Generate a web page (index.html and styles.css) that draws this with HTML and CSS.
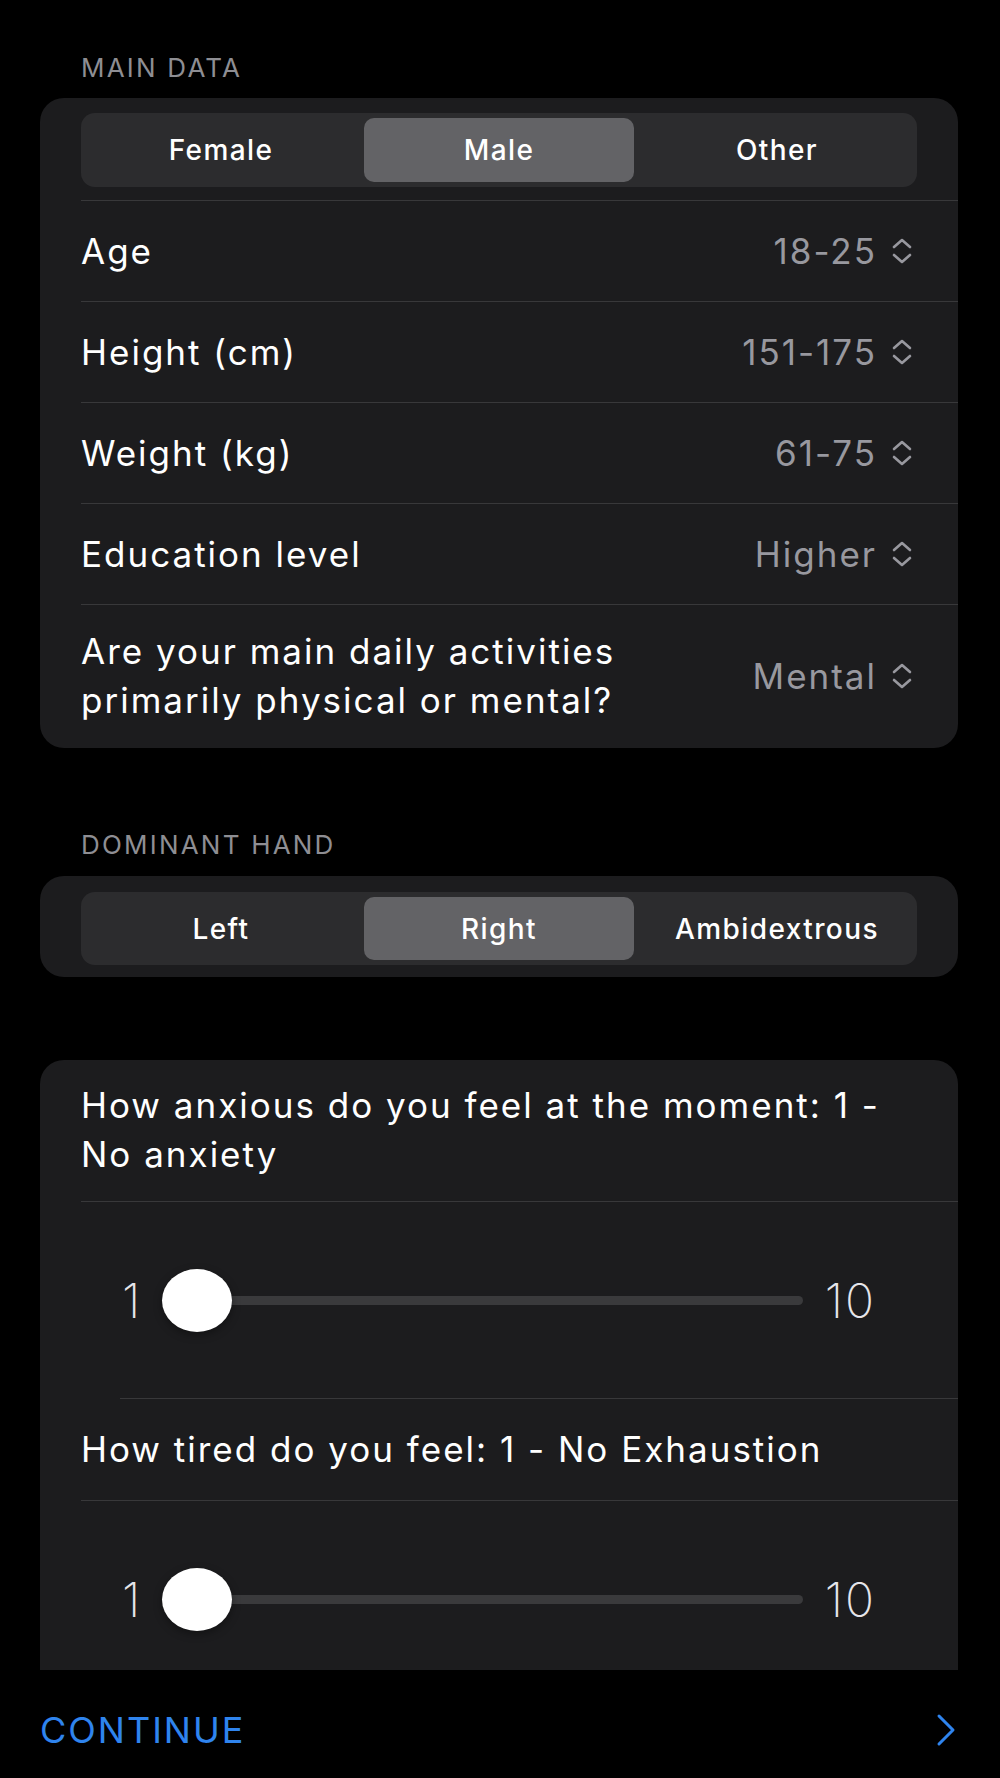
FILE: index.html
```html
<!DOCTYPE html>
<html lang="en">
<head>
    <meta charset="UTF-8">
    <meta name="viewport" content="width=device-width, initial-scale=1.0">
    <title>Profile</title>
    <link rel="stylesheet" href="styles.css">
</head>
<body>
    <div class="screen">
        <div class="content">
            <div class="section-title">MAIN DATA</div>
            <div class="card">
                <div class="segmented">
                    <div class="segment">Female</div>
                    <div class="segment selected">Male</div>
                    <div class="segment">Other</div>
                </div>
                <div class="row">
                    <div class="label">Age</div>
                    <div class="value">18-25
                        <svg class="updown" viewBox="0 0 22 28"><path d="M3 10 L11 3 L19 10 M3 18 L11 25 L19 18"/></svg>
                    </div>
                </div>
                <div class="row">
                    <div class="label">Height (cm)</div>
                    <div class="value">151-175
                        <svg class="updown" viewBox="0 0 22 28"><path d="M3 10 L11 3 L19 10 M3 18 L11 25 L19 18"/></svg>
                    </div>
                </div>
                <div class="row">
                    <div class="label">Weight (kg)</div>
                    <div class="value">61-75
                        <svg class="updown" viewBox="0 0 22 28"><path d="M3 10 L11 3 L19 10 M3 18 L11 25 L19 18"/></svg>
                    </div>
                </div>
                <div class="row">
                    <div class="label">Education level</div>
                    <div class="value">Higher
                        <svg class="updown" viewBox="0 0 22 28"><path d="M3 10 L11 3 L19 10 M3 18 L11 25 L19 18"/></svg>
                    </div>
                </div>
                <div class="row tall">
                    <div class="label wrap">Are your main daily activities primarily physical or mental?</div>
                    <div class="value">Mental
                        <svg class="updown" viewBox="0 0 22 28"><path d="M3 10 L11 3 L19 10 M3 18 L11 25 L19 18"/></svg>
                    </div>
                </div>
            </div>

            <div class="section-title second">DOMINANT HAND</div>
            <div class="card card-small">
                <div class="segmented">
                    <div class="segment">Left</div>
                    <div class="segment selected">Right</div>
                    <div class="segment">Ambidextrous</div>
                </div>
            </div>

            <div class="card card-open">
                <div class="question first">How anxious do you feel at the moment: 1 - No anxiety</div>
                <div class="slider-row">
                    <span class="min">1</span>
                    <div class="track"><div class="thumb"></div></div>
                    <span class="max">10</span>
                </div>
                <div class="question indented">How tired do you feel: 1 - No Exhaustion</div>
                <div class="slider-row">
                    <span class="min">1</span>
                    <div class="track"><div class="thumb"></div></div>
                    <span class="max">10</span>
                </div>
            </div>
        </div>

        <div class="footer">
            <span class="continue">CONTINUE</span>
            <svg class="next" viewBox="0 0 24 34"><path d="M5 3 L19 17 L5 31"/></svg>
        </div>
    </div>
</body>
</html>
```
FILE: styles.css
```css
body {
    margin: 0;
    padding: 0;
    background-color: #000;
    color: #fff;
    font-family: Inter, "Liberation Sans", sans-serif;
}

.screen {
    width: 1000px;
    height: 1778px;
    display: flex;
    flex-direction: column;
}

.content {
    height: 1670px;
    overflow: hidden;
    padding: 53px 42px 0 40px;
    box-sizing: border-box;
}

.section-title {
    font-size: 26px;
    line-height: 30px;
    color: #8e8e93;
    letter-spacing: 2.2px;
    padding-left: 41px;
    margin-bottom: 15px;
}

.section-title.second {
    margin-top: 82px;
    margin-bottom: 16px;
}

.card {
    background-color: #1c1c1e;
    border-radius: 24px;
    padding-top: 15px;
}

.card-small {
    padding: 16px 41px 12px 41px;
}

.card-open {
    margin-top: 83px;
    padding-top: 0;
    border-radius: 24px 24px 0 0;
}

.segmented {
    display: grid;
    grid-template-columns: 1fr 1fr 1fr;
    gap: 8px;
    padding: 5px;
    height: 74px;
    box-sizing: border-box;
    background-color: #2c2c2e;
    border-radius: 14px;
    margin: 0 41px 13px 41px;
}

.card-small .segmented {
    margin: 0;
    height: 73px;
}

.segment {
    display: flex;
    align-items: center;
    justify-content: center;
    font-size: 28px;
    font-weight: 500;
    letter-spacing: 1.4px;
    border-radius: 10px;
}

.segment.selected {
    background-color: #636366;
}

.row {
    display: flex;
    align-items: center;
    justify-content: space-between;
    height: 101px;
    box-sizing: border-box;
    margin-left: 41px;
    padding-right: 45px;
    border-top: 1px solid #38383a;
}

.row.tall {
    height: 144px;
    padding-bottom: 2px;
}

.label {
    font-size: 35px;
    letter-spacing: 2px;
}

.label.wrap {
    max-width: 600px;
    line-height: 49px;
}

.value {
    display: flex;
    align-items: center;
    gap: 14px;
    font-size: 35px;
    letter-spacing: 2px;
    color: #98989f;
}

.updown {
    width: 22px;
    height: 28px;
    fill: none;
    stroke: #98989f;
    stroke-width: 2.6;
    stroke-linecap: round;
    stroke-linejoin: round;
}

.question {
    font-size: 35px;
    letter-spacing: 2px;
    line-height: 49px;
    margin-left: 41px;
    padding: 21px 41px 22px 0;
    border-top: 1px solid #38383a;
}

.question.first {
    border-top: none;
}

.slider-row {
    display: flex;
    align-items: center;
    height: 197px;
    box-sizing: border-box;
    margin-left: 41px;
    padding: 0 82px 0 41px;
    border-top: 1px solid #38383a;
}

.question.indented {
    margin-left: 80px;
    padding: 26px 41px 26px 0;
    text-indent: -39px;
}

.min,
.max {
    font-size: 48px;
    font-weight: 200;
    letter-spacing: 2px;
    color: #e5e5ea;
}

.min {
    margin-right: 20px;
}

.max {
    margin-left: 22px;
}

.track {
    position: relative;
    flex: 1;
    height: 9px;
    border-radius: 5px;
    background-color: #3a3a3c;
}

.thumb {
    position: absolute;
    left: 0;
    top: -27px;
    width: 70px;
    height: 63px;
    border-radius: 50%;
    background-color: #fff;
    box-shadow: 0 3px 8px rgba(0, 0, 0, 0.35);
}

.footer {
    flex: 1;
    display: flex;
    align-items: center;
    justify-content: space-between;
    padding: 12px 42px 0 40px;
}

.continue {
    font-size: 36px;
    letter-spacing: 2px;
    color: #2f84ee;
}

.next {
    width: 24px;
    height: 34px;
    fill: none;
    stroke: #2f84ee;
    stroke-width: 3;
    stroke-linecap: round;
    stroke-linejoin: round;
}
```
